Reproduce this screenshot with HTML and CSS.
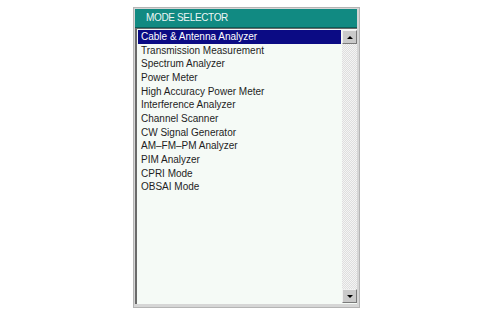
FILE: index.html
```html
<!DOCTYPE html>
<html lang="en">
<head>
    <meta charset="UTF-8">
    <title>Mode Selector</title>
    <link rel="stylesheet" href="styles.css">
</head>
<body>
    <div class="panel">
        <div class="header">MODE SELECTOR</div>
        <div class="list-box">
            <ul class="items">
                <li class="selected">Cable &amp; Antenna Analyzer</li>
                <li>Transmission Measurement</li>
                <li>Spectrum Analyzer</li>
                <li>Power Meter</li>
                <li>High Accuracy Power Meter</li>
                <li>Interference Analyzer</li>
                <li>Channel Scanner</li>
                <li>CW Signal Generator</li>
                <li>AM&#8211;FM&#8211;PM Analyzer</li>
                <li>PIM Analyzer</li>
                <li>CPRI Mode</li>
                <li>OBSAI Mode</li>
            </ul>
            <div class="scrollbar">
                <div class="scroll-btn"><span class="arrow-up"></span></div>
                <div class="track"></div>
                <div class="scroll-btn"><span class="arrow-down"></span></div>
            </div>
        </div>
    </div>
</body>
</html>
```

FILE: styles.css
```css
* {
    margin: 0;
    padding: 0;
    box-sizing: border-box;
}

body {
    font-family: 'Liberation Sans', Arial, sans-serif;
    background: #ffffff;
    padding: 7px 0 0 133px;
}

.panel {
    width: 227px;
    height: 301px;
    background: #d6d6d6;
    border: 1px solid #b4b4b4;
    padding: 1px 2px 3px 1px;
    display: flex;
    flex-direction: column;
}

.header {
    height: 19px;
    background: #118a82;
    color: #eef6f5;
    font-size: 10px;
    letter-spacing: -0.35px;
    line-height: 18px;
    padding-left: 11px;
    border-bottom: 1px solid #0a5e58;
}

.list-box {
    flex: 1;
    display: flex;
    border-left: 2px solid #6a6a6a;
    border-top: 1px solid #6a6a6a;
    background: #f5faf6;
}

.items {
    flex: 1;
    list-style: none;
    padding: 1px 1px 0 1px;
    font-size: 10px;
    color: #1e1e1e;
}

.items li {
    height: 13.67px;
    line-height: 13.67px;
    padding-left: 3px;
    white-space: nowrap;
}

.items li.selected {
    background: #0b0b84;
    color: #ffffff;
}

.scrollbar {
    width: 15px;
    display: flex;
    flex-direction: column;
    padding: 1px 0;
}

.track {
    flex: 1;
    background-color: #ebebeb;
    background-image: repeating-conic-gradient(#dedede 0 25%, #f4f4f4 0 50%);
    background-size: 2px 2px;
}

.scroll-btn {
    height: 14px;
    background: #cacaca;
    border: 1px solid;
    border-color: #f0f0f0 #7a7a7a #7a7a7a #f0f0f0;
    display: flex;
    align-items: center;
    justify-content: center;
}

.arrow-up {
    width: 0;
    height: 0;
    border-left: 3px solid transparent;
    border-right: 3px solid transparent;
    border-bottom: 3px solid #000000;
}

.arrow-down {
    width: 0;
    height: 0;
    border-left: 3px solid transparent;
    border-right: 3px solid transparent;
    border-top: 3px solid #000000;
}
```
